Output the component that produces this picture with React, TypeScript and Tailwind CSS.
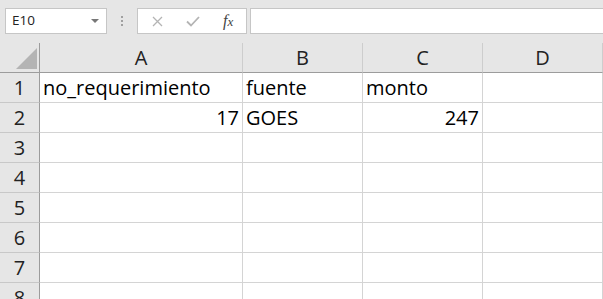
import React from "react";

const cellFont = { fontFamily: '"Open Sans", "Noto Sans", sans-serif' };

const cols = ["A", "B", "C", "D"];
const rows: [string, string, string, string][] = [
  ["no_requerimiento", "fuente", "monto", ""],
  ["17", "GOES", "247", ""],
  ["", "", "", ""],
  ["", "", "", ""],
  ["", "", "", ""],
  ["", "", "", ""],
  ["", "", "", ""],
  ["", "", "", ""],
];
const numeric = (v: string) => /^\d+$/.test(v);

export default function App() {
  return (
    <div className="w-[603px] h-[299px] overflow-hidden bg-[#e6e6e6] text-[#1f1f1f]" style={{ fontFamily: '"Open Sans", sans-serif' }}>
      {/* toolbar */}
      <div className="h-[43px] flex items-start pt-[8px]">
        <div className="ml-[5px] w-[102px] h-[26px] bg-white border border-[#c6c6c6] flex items-center pl-[6px] pr-[7px]">
          <span className="text-[13.5px] text-[#222] flex-1 leading-none">E10</span>
          <svg width="8" height="5" viewBox="0 0 8 5"><path d="M0 0h8L4 4z" fill="#777" /></svg>
        </div>
        <div className="w-[30px] h-[26px] flex flex-col items-center justify-center gap-[2px]">
          <div className="w-[2px] h-[2px] bg-[#a0a0a0]" />
          <div className="w-[2px] h-[2px] bg-[#a0a0a0]" />
          <div className="w-[2px] h-[2px] bg-[#a0a0a0]" />
        </div>
        <div className="w-[110px] h-[26px] bg-white border border-[#c6c6c6] flex items-center">
          <div className="w-[37px] flex justify-center pl-[2px]">
            <svg width="11" height="11" viewBox="0 0 11 11"><path d="M1 1l9 9M10 1l-9 9" stroke="#b4b4b4" strokeWidth="1.3" /></svg>
          </div>
          <div className="w-[36px] flex justify-center">
            <svg width="14" height="11" viewBox="0 0 14 11"><path d="M1 5.5l4 4L13 1" stroke="#b4b4b4" strokeWidth="1.8" fill="none" /></svg>
          </div>
          <div className="w-[36px] flex justify-center">
            <span className="text-[16px] italic text-[#444] leading-none" style={{ fontFamily: '"Liberation Serif", serif' }}>
              f<span className="text-[13px]">x</span>
            </span>
          </div>
        </div>
        <div className="ml-[3px] flex-1 h-[26px] bg-white border border-[#c6c6c6] border-r-0" />
      </div>
      {/* grid */}
      <div className="grid grid-cols-[40px_203px_120px_120px_120px]">
        <div className="h-[30px] border-r border-b border-[#9c9c9c] relative bg-[#e6e6e6]">
          <svg className="absolute left-[16px] top-[5px]" width="21" height="21" viewBox="0 0 21 21"><path d="M21 0V21H0z" fill="#b4b4b4" /></svg>
        </div>
        {cols.map((c) => (
          <div key={c} className="h-[30px] border-b border-b-[#9c9c9c] border-r border-r-[#cdcdcd] flex items-center justify-center text-[20px] text-[#222]" style={cellFont}>
            {c}
          </div>
        ))}
        {rows.map((r, i) => (
          <React.Fragment key={i}>
            <div className="h-[30px] border-r border-r-[#9c9c9c] border-b border-b-[#c8c8c8] flex items-center justify-center text-[20px] text-[#222]" style={cellFont}>
              {i + 1}
            </div>
            {r.map((v, j) => (
              <div
                key={j}
                className={`h-[30px] bg-white border-r border-b border-[#d4d4d4] flex items-center px-[3px] text-[20px] text-black whitespace-nowrap ${numeric(v) ? "justify-end" : "justify-start"}`}
                style={cellFont}
              >
                {v}
              </div>
            ))}
          </React.Fragment>
        ))}
      </div>
    </div>
  );
}
